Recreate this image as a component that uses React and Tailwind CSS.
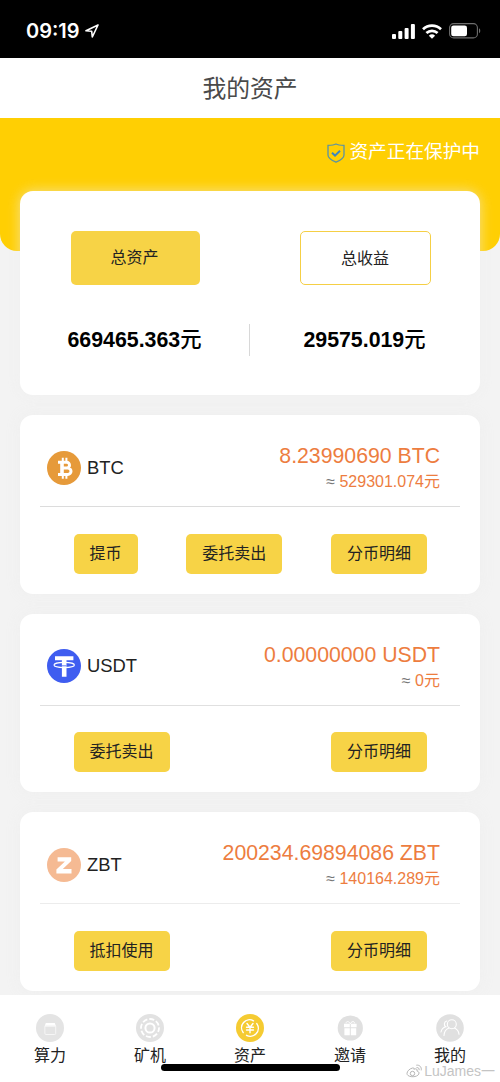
import clsx from "clsx";

const coins = [
  {
    name: "BTC",
    amount: "8.23990690",
    value: "529301.074元",
    actions: ["提币", "委托卖出", "分币明细"],
    line: "border-[#dcdcdc]",
    Icon: BtcIcon,
  },
  {
    name: "USDT",
    amount: "0.00000000",
    value: "0元",
    actions: ["委托卖出", "分币明细"],
    line: "border-[#e0e0e0]",
    Icon: UsdtIcon,
  },
  {
    name: "ZBT",
    amount: "200234.69894086",
    value: "140164.289元",
    actions: ["抵扣使用", "分币明细"],
    line: "border-[#ececec]",
    Icon: ZbtIcon,
  },
];

const tabs = [
  { label: "算力", Icon: PowerIcon },
  { label: "矿机", Icon: MinerIcon },
  { label: "资产", Icon: AssetIcon },
  { label: "邀请", Icon: GiftIcon },
  { label: "我的", Icon: UserIcon },
];

function BtcIcon() {
  return (
    <svg viewBox="0 0 34 34" className="size-[34px]">
      <circle cx="17" cy="17" r="17" fill="#e69a3a" />
      <g fill="none" stroke="#fff">
        <path d="M15.8 6.8v4M19.4 6.8v4M15.8 23.8v4M19.4 23.8v4" strokeWidth="2" />
        <path d="M11 11.3h8.6a2.9 2.9 0 0 1 0 5.8h-4.800M19.600 17.100h1.200a3.200 3.200 0 0 1 0 6.400H11" strokeWidth="3" />
        <path d="M15 11v12.6" strokeWidth="3.6" />
      </g>
    </svg>
  );
}

function UsdtIcon() {
  return (
    <svg viewBox="0 0 34 34" className="size-[34px]">
      <circle cx="17" cy="17" r="17" fill="#3f5df0" />
      <path d="M8 7.2h18.4v4h-6.900v16.600h-4.600V11.200H8z" fill="#fff" />
      <ellipse cx="17.2" cy="16" rx="10.2" ry="2.6" fill="none" stroke="#fff" strokeWidth="1.1" />
      <path d="M15 16.8c1.4.1 3 .1 4.4 0" fill="none" stroke="#3f5df0" strokeWidth=".8" />
    </svg>
  );
}

function ZbtIcon() {
  return (
    <svg viewBox="0 0 34 34" className="size-[34px]">
      <circle cx="17" cy="17" r="17" fill="#f5ba93" />
      <path d="M10.6 9.2h13.6v3.9l-8.4 8h8.7v4.3H9.4v-3.9l8.5-8h-7.3z" fill="#fff" />
    </svg>
  );
}

function PowerIcon() {
  return (
    <svg viewBox="0 0 28 28" className="size-7">
      <circle cx="14" cy="14" r="14" fill="#e4e4e4" />
      <path d="M9.8 9h9l1.2 3.5H8.6z" fill="#fff" />
      <rect x="8.9" y="11.5" width="10.8" height="9" rx="1" fill="none" stroke="#f7f7f7" strokeWidth=".9" />
    </svg>
  );
}

function MinerIcon() {
  return (
    <svg viewBox="0 0 28 28" className="size-7">
      <circle cx="14" cy="14" r="14" fill="#e2e2e2" />
      <g fill="none" stroke="#fff">
        <circle cx="14" cy="14" r="9" strokeWidth="1.8" strokeDasharray="5.07 2" strokeDashoffset="1" />
        <circle cx="14" cy="14" r="4.6" strokeWidth="2" />
      </g>
    </svg>
  );
}

function AssetIcon() {
  return (
    <svg viewBox="0 0 28 28" className="size-7">
      <circle cx="14" cy="14" r="14" fill="#f5cb32" />
      <g fill="none" stroke="#fff" strokeWidth="1.4" strokeLinecap="round">
        <path d="M7.2 18.6A8 8 0 0 1 17.5 6.8M20.8 9.6a8 8 0 0 1-10.3 11.7" />
        <path d="M11 9.5l3 3.8 3-3.8M14 13.3v5.5M10.5 13.3h7M10.5 16h7" />
      </g>
    </svg>
  );
}

function GiftIcon() {
  return (
    <svg viewBox="0 0 28 28" className="size-7">
      <circle cx="14.3" cy="14" r="12.6" fill="#e0e0e0" />
      <path d="M8 9.8h5.8v3.5H8zM14.8 9.8h5.8v3.5h-5.8zM8.4 14.2h5.4v7H8.4zM14.8 14.2h5.4v7h-5.4z" fill="#fff" />
      <path d="M14.3 9.8c-1.1-2.8-4.4-2.9-4.2-.5M14.3 9.8c1.1-2.8 4.4-2.9 4.2-.5" fill="none" stroke="#fff" strokeWidth="1" />
    </svg>
  );
}

function UserIcon() {
  return (
    <svg viewBox="0 0 28 28" className="size-7">
      <circle cx="14" cy="14" r="13.8" fill="#e0e0e0" />
      <g fill="none" stroke="#fff" strokeWidth="1.1" strokeLinecap="round">
        <circle cx="15.8" cy="10.2" r="4.5" />
        <path d="M8 21.5c.2-4.4 2-6.500 5-7.600M18.500 14c2.600 1.200 4.200 3 4.500 6.200" />
        <path d="M10.8 7a3.200 3.200 0 0 0-1 5.800c-2.600.8-4.300 2.600-4.800 5.200" />
      </g>
    </svg>
  );
}

function StatusBar() {
  return (
    <div className="flex h-[58px] shrink-0 items-start justify-between bg-black pt-[19px] pr-[19px] pl-[26px] text-white">
      <div className="flex items-center">
        <span className="font-['Inter',sans-serif] text-[20px] leading-6 font-semibold">09:19</span>
        <svg viewBox="0 0 14 14" className="mt-[-1px] ml-[5px] size-[14px]" fill="none" stroke="currentColor" strokeWidth="1.6" strokeLinejoin="round">
          <path d="M13 1 1 6.8l5.7.5.6 5.7z" />
        </svg>
      </div>
      <div className="mt-1 flex items-center">
        <svg viewBox="0 0 23 15" className="h-[15px] w-[23px]" fill="currentColor">
          <rect x="0" y="10" width="4" height="5" rx="1" />
          <rect x="6.3" y="7" width="4" height="8" rx="1" />
          <rect x="12.6" y="4" width="4" height="11" rx="1" />
          <rect x="18.9" y="0" width="4" height="15" rx="1" />
        </svg>
        <svg viewBox="0 0 20 15" className="ml-[7px] h-[15px] w-5" fill="none" stroke="currentColor" strokeWidth="2.7">
          <path d="M1 5.3a13 13 0 0 1 18 0" />
          <path d="M4.4 9a8.2 8.2 0 0 1 11.2 0" />
          <path d="M10 14.8 6.9 11.7a4.5 4.5 0 0 1 6.2 0z" fill="currentColor" stroke="none" />
        </svg>
        <svg viewBox="0 0 32 16" className="ml-[7px] h-4 w-8">
          <rect x=".6" y=".6" width="27.8" height="14.3" rx="4" fill="none" stroke="#6e6e6e" strokeWidth="1.1" />
          <rect x="2.2" y="2.4" width="15.8" height="10.8" rx="2.3" fill="#fff" />
          <path d="M30 5.3c1.7.7 1.7 4.3 0 5z" fill="#6e6e6e" />
        </svg>
      </div>
    </div>
  );
}

function Summary() {
  return (
    <section className="relative mx-5 -mt-[60px] h-[204px] shrink-0 rounded-[13px] bg-white shadow-[0_0_13px_rgba(238,238,238,0.6)]">
      <div className="flex justify-between pt-[40px] pr-[49px] pl-[51px] text-[16px] text-[#222]">
        <div className="flex h-[54px] w-[129px] items-center justify-center rounded-[5px] bg-[#f7d346] pr-[2px]">总资产</div>
        <div className="flex h-[54px] w-[131px] items-center justify-center rounded-[5px] border border-[#f5cf45] pt-px pr-px">总收益</div>
      </div>
      <div className="mt-[39px] mr-px flex items-center text-[21.33px] leading-8 font-bold text-black">
        <div className="flex-1 text-center">
          669465.363<span className="font-medium">元</span>
        </div>
        <div className="h-8 w-px bg-[#d8d8d8]" />
        <div className="flex-1 text-center">
          29575.019<span className="font-medium">元</span>
        </div>
      </div>
    </section>
  );
}

function CoinCard({ coin }) {
  const { Icon } = coin;
  return (
    <section className="h-[178.6px] shrink-0 rounded-[13px] bg-white px-5 shadow-[0_0_13px_rgba(238,238,238,0.8)]">
      <div className={clsx("flex h-[92px] justify-between border-b pr-5 pl-[7px]", coin.line)}>
        <div className="flex items-center gap-[6px] pt-[14px] text-[18.4px] text-[#222]">
          <Icon />
          <span>{coin.name}</span>
        </div>
        <div className="pt-[27px] text-right text-[#ed7d3f]">
          <div className="text-[21.25px] leading-[28px]">
            {coin.amount} {coin.name}
          </div>
          <div className="text-[16px] leading-6">
            <span className="text-[#777]">≈</span> {coin.value}
          </div>
        </div>
      </div>
      <div className="flex justify-between pt-[26.7px] pr-[33px] pl-[33.5px]">
        {coin.actions.map((label) => (
          <button key={label} className="h-10 rounded-[5px] bg-[#f7d346] px-4 text-[16px] text-[#222]">
            {label}
          </button>
        ))}
      </div>
    </section>
  );
}

export default function App() {
  return (
    <div className="relative flex h-[1082px] w-[500px] flex-col overflow-hidden bg-[#f3f3f3] font-['Liberation_Sans','Noto_Sans_CJK_SC',sans-serif]">
      <StatusBar />
      <header className="flex h-[60px] shrink-0 items-center justify-center bg-white pt-px text-[23.8px] text-[#4a4a4a]">
        我的资产
      </header>

      <div className="flex h-[133px] shrink-0 items-start justify-end rounded-b-[17px] bg-[#ffcf03] pt-[20px] pr-5 text-[18.66px] leading-7 text-white">
        <svg viewBox="0 0 18 20" className="mt-[5px] mr-[4px] h-5 w-[18px]" fill="none" stroke="#5c93a3">
          <path d="M9 1C7 2.2 3.5 2.3 1 2.3V12c0 3.4 4.5 5.7 8 7.2 3.5-1.5 8-3.8 8-7.2V2.3C14.5 2.3 11 2.2 9 1z" strokeWidth="1.3" />
          <path d="m5 9.8 3 2.800 5-4.800" stroke="#3d86bd" strokeWidth="2" />
        </svg>
        资产正在保护中
      </div>

      <Summary />

      <main className="mx-5 mt-5 flex min-h-0 flex-1 flex-col gap-5">
        {coins.map((coin) => (
          <CoinCard key={coin.name} coin={coin} />
        ))}
      </main>

      <nav className="relative grid h-[87px] shrink-0 grid-cols-5 bg-white text-[16px] leading-6 text-[#222]">
        {tabs.map(({ label, Icon }) => (
          <div key={label} className="flex flex-col items-center gap-[2px] pt-[19px]">
            <Icon />
            <span>{label}</span>
          </div>
        ))}
      </nav>

      <div className="absolute bottom-[11px] left-[161px] h-[7px] w-[179px] rounded-full bg-black" />
      <div className="absolute right-[5px] bottom-[3px] flex items-center gap-[2px] text-[14px] leading-4 text-[#c4c4c4]">
        <svg viewBox="0 0 16 14" className="h-[14px] w-4" fill="none" stroke="#b5b5b5">
          <path d="M6.5 4C3.5 4.8 1 7.2 1 9.5c0 4.5 12 4.3 12-.5 0-1-1-1.7-2-1.9.6-2-.8-2.8-3.2-1.9.3-1-.1-1.7-1.3-1.2z" />
          <circle cx="6.5" cy="9.5" r="2.2" />
          <path d="M10.5 3.6c1.9-.3 3 .9 2.6 2.6M10.3 1.2c3.3-.5 5.6 2 4.9 5.2" />
        </svg>
        <span>LuJames一</span>
      </div>
    </div>
  );
}
